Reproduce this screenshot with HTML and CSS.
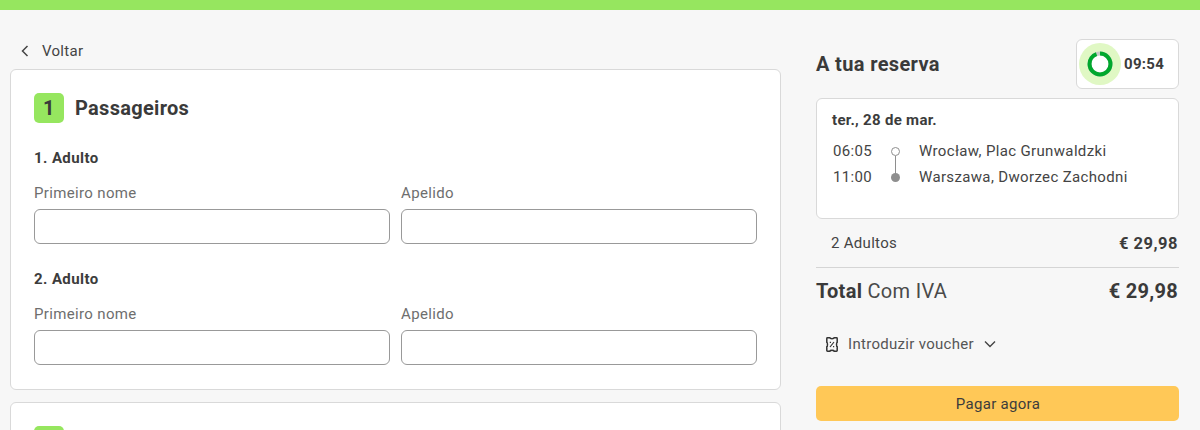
FILE: index.html
```html
<!DOCTYPE html>
<html lang="pt">
<head>
<meta charset="utf-8">
<title>Checkout</title>
<link rel="stylesheet" href="styles.css">
</head>
<body>
<div class="topbar"></div>
<div class="page">
  <main class="main">
    <a class="back">
      <svg class="back-icon" width="8" height="12" viewBox="0 0 8 12"><path d="M6.500 1 1.500 6l5 5" fill="none" stroke="#444" stroke-width="1.500"/></svg>
      <span>Voltar</span>
    </a>
    <section class="card">
      <h2 class="card-title"><span class="step">1</span>Passageiros</h2>
      <div class="passenger">
        <h3 class="pax-title">1. Adulto</h3>
        <div class="fields">
          <label class="field"><span class="field-label">Primeiro nome</span><span class="input"></span></label>
          <label class="field"><span class="field-label">Apelido</span><span class="input"></span></label>
        </div>
      </div>
      <div class="passenger">
        <h3 class="pax-title">2. Adulto</h3>
        <div class="fields">
          <label class="field"><span class="field-label">Primeiro nome</span><span class="input"></span></label>
          <label class="field"><span class="field-label">Apelido</span><span class="input"></span></label>
        </div>
      </div>
    </section>
    <section class="card next-card"><span class="step"></span></section>
  </main>
  <aside class="side">
    <div class="side-head">
      <h2 class="side-title">A tua reserva</h2>
      <div class="timer">
        <svg class="timer-ring" width="42" height="42" viewBox="0 0 42 42">
          <circle cx="21" cy="21" r="21" fill="#e0f8c4"/>
          <circle cx="21" cy="21" r="10.500" fill="#fff" stroke="#c9c9c9" stroke-width="4"/>
          <circle cx="21" cy="21" r="10.500" fill="none" stroke="#00a82d" stroke-width="4" stroke-dasharray="62 66" transform="rotate(-90 21 21)"/>
        </svg>
        <span class="timer-text">09:54</span>
      </div>
    </div>
    <div class="trip">
      <div class="trip-date">ter., 28 de mar.</div>
      <div class="trip-rows">
        <div class="trip-row"><span class="trip-time">06:05</span><span class="dot dot-open"></span><span>Wrocław, Plac Grunwaldzki</span></div>
        <div class="trip-row"><span class="trip-time">11:00</span><span class="dot dot-full"></span><span>Warszawa, Dworzec Zachodni</span></div>
      </div>
    </div>
    <div class="line-item"><span>2 Adultos</span><strong class="line-price">€ 29,98</strong></div>
    <div class="total"><span><strong>Total</strong> Com IVA</span><strong>€ 29,98</strong></div>
    <div class="voucher">
      <svg class="voucher-icon" width="12" height="15" viewBox="0 0 12 15" fill="none" stroke="#333" stroke-width="1.500">
        <path d="M1.500.8h2.300c.3 1.200 4.100 1.200 4.400 0h2.300c.3 0 .7.300.7.700v3.700c-.9.300-.9 4.300 0 4.600v3.700c0 .4-.4.700-.7.700H8.200c-.3-1.200-4.100-1.200-4.400 0H1.500c-.3 0-.7-.3-.7-.7V9.800c.9-.3.900-4.300 0-4.600V1.500c0-.4.400-.7.700-.7z"/>
        <path d="m4 10 4-5M3.800 5.400h1.200M7 9.600h1.200" stroke-width="1.200"/>
      </svg>
      <span>Introduzir voucher</span>
      <svg class="voucher-chevron" width="12" height="8" viewBox="0 0 12 8"><path d="m1 1.500 5 5 5-5" fill="none" stroke="#444" stroke-width="1.400"/></svg>
    </div>
    <button class="pay" type="button">Pagar agora</button>
  </aside>
</div>
</body>
</html>
```

FILE: styles.css
```css
* { box-sizing: border-box; }
html, body { margin: 0; height: 430px; overflow: hidden; }
body { background: #f7f7f7; color: #3c3c3c; font-family: Roboto, "Liberation Sans", sans-serif; font-size: 15px; letter-spacing: .3px; }
.topbar { height: 10px; background: #96e65f; }
.page { display: flex; gap: 35px; height: 420px; overflow: hidden; padding: 0 21px 0 10px; }
.main { width: 771px; flex: none; }
.side { width: 363px; flex: none; padding-top: 29px; }
.back { display: flex; align-items: center; gap: 13px; height: 59px; padding: 23px 0 0 11px; line-height: 36px; color: #444; }
.back-icon { flex: none; }
.card { background: #fff; border: 1px solid #d9d9d9; border-radius: 6px; padding: 23px; height: 321px; }
.next-card { margin-top: 12px; height: 28px; overflow: hidden; }
.card-title { display: flex; align-items: center; gap: 11px; margin: 0 0 25px; font-size: 20px; line-height: 30px; font-weight: 700; color: #3a3a3a; letter-spacing: .3px; }
.step { display: flex; align-items: center; justify-content: center; width: 30px; height: 30px; border-radius: 5px; background: #96e65f; flex: none; font-weight: 700; }
.passenger + .passenger { margin-top: 25px; }
.pax-title { margin: 0 0 15px; font-size: 15px; line-height: 20px; font-weight: 700; color: #3c3c3c; letter-spacing: .4px; }
.fields { display: grid; grid-template-columns: 356px 356px; gap: 11px; }
.field { display: block; }
.field-label { display: block; height: 26px; line-height: 20px; color: #6e6e6e; letter-spacing: .35px; }
.input { display: block; height: 35px; background: #fff; border: 1px solid #999; border-radius: 6px; }
.side-head { display: flex; align-items: center; justify-content: space-between; height: 50px; margin-bottom: 9px; }
.side-title { margin: 0; font-size: 20px; line-height: 50px; font-weight: 700; color: #3a3a3a; letter-spacing: .35px; }
.timer { display: flex; align-items: center; gap: 3px; width: 103px; height: 50px; padding-left: 2px; background: #fff; border: 1px solid #d9d9d9; border-radius: 6px; }
.timer-ring { flex: none; }
.timer-text { font-weight: 700; }
.trip { height: 121px; background: #fff; border: 1px solid #d9d9d9; border-radius: 6px; padding: 12px 15px; }
.trip-date { font-weight: 700; line-height: 19px; margin-bottom: 11px; }
.trip-rows { display: flex; flex-direction: column; gap: 6px; }
.trip-row { display: grid; grid-template-columns: 58px 28px 1fr; align-items: center; height: 20px; padding-left: 1px; color: #444; letter-spacing: .35px; }
.dot { width: 9px; height: 9px; border-radius: 50%; justify-self: start; position: relative; }
.dot-open { border: 1px solid #8e8e8e; background: #fff; }
.dot-full { background: #8e8e8e; }
.dot-full::before { content: ""; position: absolute; left: 4px; top: -17px; width: 1px; height: 18px; background: #8e8e8e; }
.line-item { display: flex; justify-content: space-between; align-items: center; height: 49px; padding: 0 1px 0 15px; border-bottom: 1px solid #d5d5d5; color: #444; }
.line-price { font-size: 16.500px; color: #3c3c3c; letter-spacing: .5px; }
.total { display: flex; justify-content: space-between; align-items: center; height: 46px; padding-right: 1px; font-size: 20px; color: #4a4a4a; }
.total strong { font-weight: 700; color: #3a3a3a; }
.voucher { display: flex; align-items: center; height: 30px; margin-top: 15px; padding-left: 10px; color: #555; }
.voucher-icon { margin-right: 10px; flex: none; }
.voucher-chevron { margin-left: 10px; flex: none; }
.pay { display: block; width: 100%; height: 35px; margin-top: 27px; border: 0; border-radius: 5px; background: #ffc857; color: #3c3c3c; font: 400 15px Roboto, "Liberation Sans", sans-serif; letter-spacing: .3px; padding-right: 5px; }
```
